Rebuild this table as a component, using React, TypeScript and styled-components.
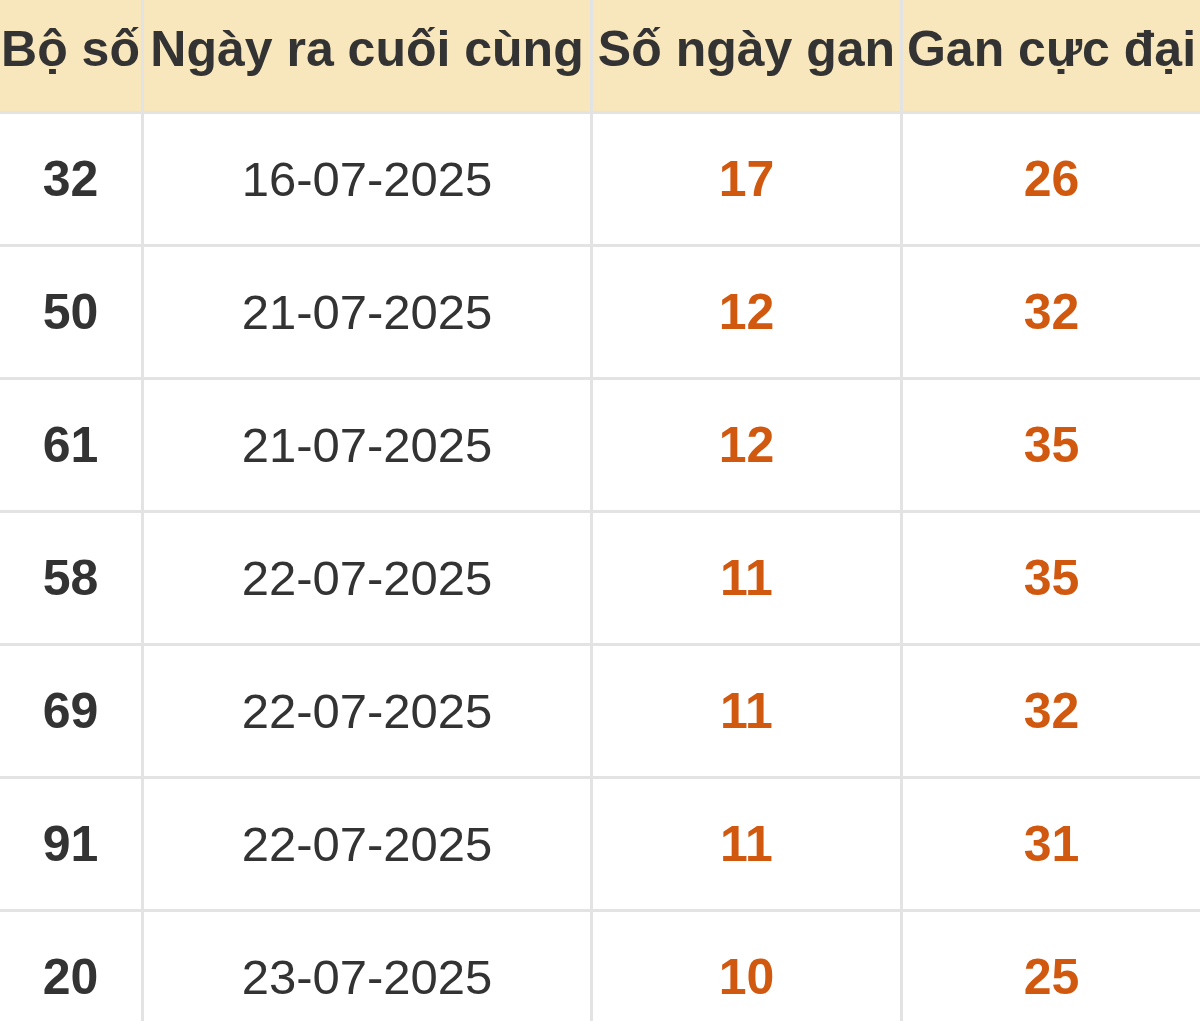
import React from "react";
import styled, { createGlobalStyle } from "styled-components";

const GlobalStyle = createGlobalStyle`
  html, body {
    margin: 0;
    padding: 0;
    background: #ffffff;
  }
  body {
    width: 1200px;
    height: 1021px;
    overflow: hidden;
    font-family: "Liberation Sans", Arial, sans-serif;
  }
`;

const Table = styled.div`
  display: grid;
  grid-template-columns: 141px 446px 307px 297px;
  grid-template-rows: 111px;
  grid-auto-rows: 130px;
  gap: 3px;
  background: #e3e3e3;
  width: 1200px;
`;

const HeadCell = styled.div`
  background: #f8e6bc;
  color: #333333;
  font-size: 50px;
  font-weight: 700;
  display: flex;
  align-items: center;
  justify-content: center;
  padding-bottom: 14px;
  box-sizing: border-box;
  white-space: nowrap;
  overflow: hidden;
`;

const Cell = styled.div<{ $tone?: "pair" | "date" | "hot" }>`
  background: #ffffff;
  display: flex;
  align-items: center;
  justify-content: center;
  font-size: ${(p) => (p.$tone === "date" ? "49px" : "50px")};
  font-weight: ${(p) => (p.$tone === "date" ? 400 : 700)};
  color: ${(p) => (p.$tone === "hot" ? "#d0580f" : "#333333")};
  white-space: nowrap;
`;

const rows = [
  { pair: "32", date: "16-07-2025", gan: 17, max: 26 },
  { pair: "50", date: "21-07-2025", gan: 12, max: 32 },
  { pair: "61", date: "21-07-2025", gan: 12, max: 35 },
  { pair: "58", date: "22-07-2025", gan: 11, max: 35 },
  { pair: "69", date: "22-07-2025", gan: 11, max: 32 },
  { pair: "91", date: "22-07-2025", gan: 11, max: 31 },
  { pair: "20", date: "23-07-2025", gan: 10, max: 25 },
];

export default function App() {
  return (
    <>
      <GlobalStyle />
      <Table>
        <HeadCell>Bộ số</HeadCell>
        <HeadCell>Ngày ra cuối cùng</HeadCell>
        <HeadCell>Số ngày gan</HeadCell>
        <HeadCell>Gan cực đại</HeadCell>
        {rows.map((r, i) => (
          <React.Fragment key={i}>
            <Cell $tone="pair">{r.pair}</Cell>
            <Cell $tone="date">{r.date}</Cell>
            <Cell $tone="hot">{r.gan}</Cell>
            <Cell $tone="hot">{r.max}</Cell>
          </React.Fragment>
        ))}
      </Table>
    </>
  );
}
